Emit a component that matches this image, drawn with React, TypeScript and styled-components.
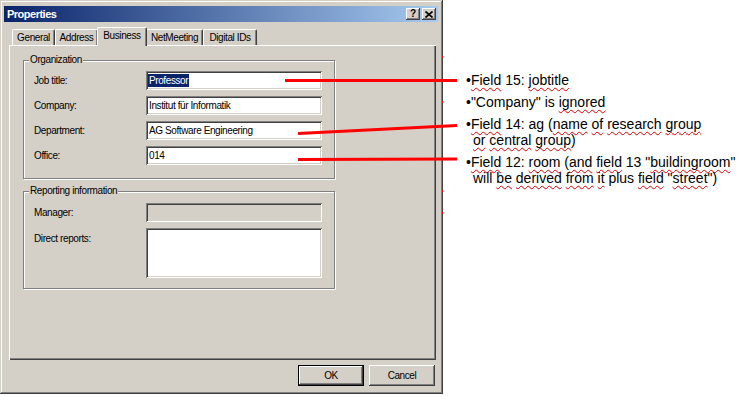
import React from "react";
import styled, { createGlobalStyle, css } from "styled-components";

const GlobalStyle = createGlobalStyle`
  html, body { margin: 0; padding: 0; background: #fff; }
  body {
    width: 737px;
    height: 397px;
    overflow: hidden;
    font-family: "Liberation Sans", Arial, sans-serif;
  }
`;

const Page = styled.div`
  position: relative;
  display: flex;
  align-items: flex-start;
  width: 737px;
  height: 397px;
`;

const Window = styled.div`
  box-sizing: border-box;
  width: 443px;
  height: 394px;
  padding: 6px 5px 0 4px;
  background: #d4d0c8;
  box-shadow: inset -1px -1px #404040, inset 1px 1px #d4d0c8,
    inset -2px -2px #808080, inset 2px 2px #fff;
  display: flex;
  flex-direction: column;
  font-family: "Liberation Sans", Arial, sans-serif;
  font-size: 10px;
  letter-spacing: -0.4px;
  color: #000;
`;

const TitleBar = styled.div`
  height: 16px;
  display: flex;
  align-items: center;
  padding: 0 2px 0 3px;
  background: linear-gradient(to right, #0a246a, #a6caf0);
  color: #fff;
  font-weight: bold;
  font-size: 11px;
  letter-spacing: -0.5px;
`;

const TitleText = styled.span`
  flex: 1;
`;

const CaptionButton = styled.div`
  box-sizing: border-box;
  width: 14px;
  height: 12px;
  margin-left: 2px;
  background: #d4d0c8;
  box-shadow: inset -1px -1px #404040, inset 1px 1px #fff,
    inset -2px -2px #808080;
  display: flex;
  align-items: center;
  justify-content: center;
  color: #000;
  font-size: 10px;
  font-weight: bold;
  letter-spacing: 0;
  line-height: 10px;
`;

const TabStrip = styled.div`
  height: 24px;
  margin: 0 2px -1px 5px;
  padding-left: 3px;
  display: flex;
  align-items: flex-end;
`;

const Tab = styled.div<{ $w: number; $active?: boolean }>`
  box-sizing: border-box;
  position: relative;
  width: ${(p) => p.$w + (p.$active ? 2 : 0)}px;
  height: ${(p) => (p.$active ? 19 : 16)}px;
  margin: 0 ${(p) => (p.$active ? -1 : 0)}px ${(p) => (p.$active ? 0 : 1)}px;
  z-index: ${(p) => (p.$active ? 1 : 0)};
  background: #d4d0c8;
  border-top: 1px solid #fff;
  border-left: 1px solid #fff;
  border-right: 1px solid #404040;
  border-radius: 2px 2px 0 0;
  box-shadow: inset -1px 0 #808080;
  display: flex;
  justify-content: center;
  padding-top: 1px;
  line-height: 13px;
  white-space: nowrap;
`;

const TabPanel = styled.div`
  box-sizing: border-box;
  height: 315px;
  margin: 0 2px 0 5px;
  padding: 15px 0 0 14px;
  box-shadow: inset 1px 1px #fff, inset -1px -1px #404040,
    inset -2px -2px #808080;
  display: flex;
  flex-direction: column;
  gap: 12px;
`;

const Group = styled.div<{ $h: number; $pt: number }>`
  position: relative;
  box-sizing: border-box;
  width: 312px;
  height: ${(p) => p.$h}px;
  padding: ${(p) => p.$pt}px 0 0 10px;
  border: 1px solid #808080;
  box-shadow: inset 1px 1px #fff, 1px 1px #fff;
  display: grid;
  grid-template-columns: 112px 176px;
  grid-auto-rows: min-content;
  row-gap: 6px;
`;

const GroupLabel = styled.span`
  position: absolute;
  top: -7px;
  left: 5px;
  padding: 0 1px;
  background: #d4d0c8;
  line-height: 12px;
`;

const Label = styled.div<{ $top?: boolean }>`
  display: flex;
  align-items: ${(p) => (p.$top ? "flex-start" : "center")};
  padding-top: ${(p) => (p.$top ? 5 : 0)}px;
  line-height: 12px;
`;

const Field = styled.div<{ $disabled?: boolean; $h?: number }>`
  box-sizing: border-box;
  height: ${(p) => p.$h ?? 19}px;
  padding: 0 3px;
  background: ${(p) => (p.$disabled ? "#d4d0c8" : "#fff")};
  box-shadow: inset 1px 1px #808080, inset -1px -1px #fff,
    inset 2px 2px #404040, inset -2px -2px #d4d0c8;
  display: flex;
  align-items: center;
  white-space: nowrap;
  overflow: hidden;
`;

const Selected = styled.span`
  background: #0a246a;
  color: #fff;
  line-height: 13px;
  padding: 0 1px;
  margin-left: -1px;
`;

const ButtonRow = styled.div`
  display: flex;
  justify-content: flex-end;
  gap: 5px;
  margin-top: 5px;
  padding-right: 3px;
`;

const Button = styled.div<{ $default?: boolean }>`
  box-sizing: border-box;
  width: 66px;
  height: 21px;
  display: flex;
  align-items: center;
  justify-content: center;
  ${(p) =>
    p.$default
      ? css`
          border: 1px solid #000;
          box-shadow: inset -1px -1px #404040, inset 1px 1px #fff,
            inset -2px -2px #808080;
        `
      : css`
          box-shadow: inset -1px -1px #404040, inset 1px 1px #fff,
            inset -2px -2px #808080, inset 2px 2px #d4d0c8;
        `}
`;

const Notes = styled.div`
  margin: 72px 0 0 23px;
  display: flex;
  flex-direction: column;
  gap: 6px;
  font-family: "Liberation Sans", Arial, sans-serif;
  font-size: 14px;
  line-height: 16px;
  color: #000;
  white-space: nowrap;
`;

const Note = styled.div`
  display: flex;
  flex-direction: column;
`;

const NoteLine = styled.div<{ $indent?: boolean }>`
  padding-left: ${(p) => (p.$indent ? 7 : 0)}px;
`;

const Misspelled = styled.span`
  text-decoration-line: underline;
  text-decoration-style: wavy;
  text-decoration-color: #e00000;
  text-decoration-thickness: 1px;
  text-underline-offset: 2px;
  text-decoration-skip-ink: none;
`;

const Overlay = styled.svg`
  position: absolute;
  left: 0;
  top: 0;
  pointer-events: none;
`;

const W = ({ children }: { children: React.ReactNode }) => (
  <Misspelled>{children}</Misspelled>
);

export default function App() {
  return (
    <>
      <GlobalStyle />
      <Page>
        <Window>
          <TitleBar>
            <TitleText>Properties</TitleText>
            <CaptionButton>?</CaptionButton>
            <CaptionButton>
              <svg width="8" height="7" viewBox="0 0 8 7">
                <path d="M0.5 0.5 L7.5 6.5 M7.5 0.5 L0.5 6.5" stroke="#000" strokeWidth="1.6" />
              </svg>
            </CaptionButton>
          </TitleBar>
          <TabStrip>
            <Tab $w={43}>General</Tab>
            <Tab $w={43}>Address</Tab>
            <Tab $w={48} $active>
              Business
            </Tab>
            <Tab $w={57}>NetMeeting</Tab>
            <Tab $w={54}>Digital IDs</Tab>
          </TabStrip>
          <TabPanel>
            <Group $h={119} $pt={10}>
              <GroupLabel>Organization</GroupLabel>
              <Label>Job title:</Label>
              <Field>
                <Selected>Professor</Selected>
              </Field>
              <Label>Company:</Label>
              <Field>Institut für Informatik</Field>
              <Label>Department:</Label>
              <Field>AG Software Engineering</Field>
              <Label>Office:</Label>
              <Field>014</Field>
            </Group>
            <Group $h={98} $pt={11}>
              <GroupLabel>Reporting information</GroupLabel>
              <Label>Manager:</Label>
              <Field $disabled />
              <Label $top>Direct reports:</Label>
              <Field $h={50} />
            </Group>
          </TabPanel>
          <ButtonRow>
            <Button $default>OK</Button>
            <Button>Cancel</Button>
          </ButtonRow>
        </Window>
        <Notes>
          <Note>
            <NoteLine>
              •<W>Field</W> 15: <W>jobtitle</W>
            </NoteLine>
          </Note>
          <Note>
            <NoteLine>
              •"Company" is <W>ignored</W>
            </NoteLine>
          </Note>
          <Note>
            <NoteLine>
              •<W>Field</W> 14: ag (<W>name</W> <W>of</W> <W>research</W> <W>group</W>
            </NoteLine>
            <NoteLine $indent>
              <W>or</W> <W>central</W> <W>group</W>)
            </NoteLine>
          </Note>
          <Note>
            <NoteLine>
              •<W>Field</W> 12: <W>room</W> (<W>and</W> <W>field</W> 13 "<W>buildingroom</W>"
            </NoteLine>
            <NoteLine $indent>
              will <W>be</W> <W>derived</W> <W>from</W> <W>it</W> plus <W>field</W> "<W>street</W>")
            </NoteLine>
          </Note>
        </Notes>
        <Overlay width="737" height="397" viewBox="0 0 737 397">
          <g stroke="#ff0000" strokeWidth="3" fill="none">
            <line x1="285" y1="80.5" x2="457" y2="80.5" />
            <line x1="298" y1="133.5" x2="457" y2="125.5" />
            <line x1="298" y1="159.5" x2="457" y2="159" />
          </g>
          <g fill="#ff0000">
            <rect x="442" y="56" width="1" height="2" />
            <rect x="442" y="101" width="1" height="2" />
            <rect x="442" y="190" width="1" height="2" />
            <rect x="442" y="212" width="1" height="2" />
          </g>
        </Overlay>
      </Page>
    </>
  );
}
